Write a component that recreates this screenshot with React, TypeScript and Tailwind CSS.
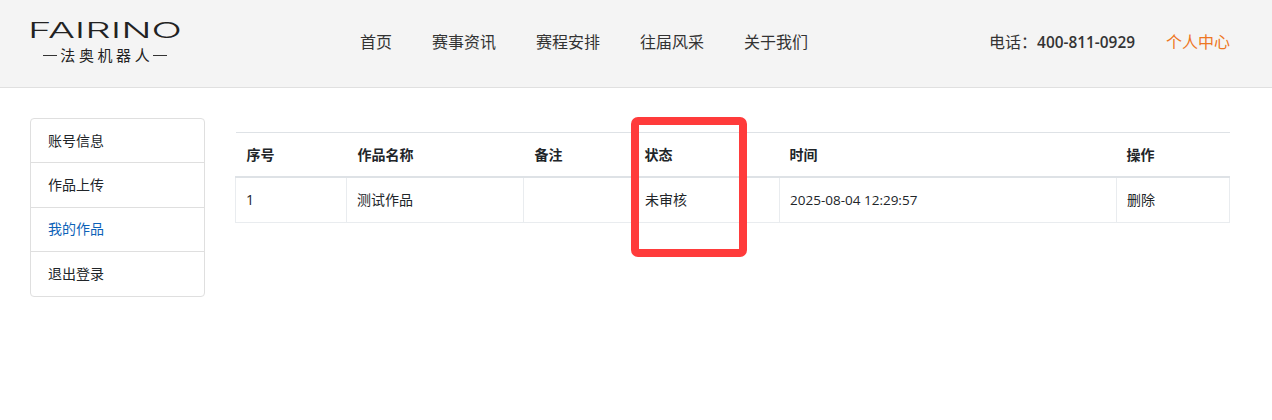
import React from 'react';

const font = { fontFamily: '"Open Sans", "Noto Sans CJK SC", sans-serif' };

const navItems = ['首页', '赛事资讯', '赛程安排', '往届风采', '关于我们'];
const sideItems = ['账号信息', '作品上传', '我的作品', '退出登录'];

const Logo = () => (
  <div className="w-[150px] flex flex-col items-center text-[#222]">
    <svg width="150" height="20" viewBox="0 0 150 20" className="block overflow-visible">
      <text
        x="-2"
        y="18"
        textLength="154"
        lengthAdjust="spacingAndGlyphs"
        fontSize="21"
        fontWeight="300"
        fill="#222"
        fontFamily="Inter, sans-serif"
      >
        FAIRINO
      </text>
    </svg>
    <div className="flex items-center justify-between mt-[5px] w-[124px]">
      <span className="h-px w-[14px] bg-[#333]" />
      <span className="text-[15px] leading-[20px] tracking-[3.6px] -mr-[3.6px] whitespace-nowrap">法奥机器人</span>
      <span className="h-px w-[14px] bg-[#333]" />
    </div>
  </div>
);

export default function App() {
  return (
    <div className="relative min-h-[420px] bg-white text-[14px] text-[#212529]" style={font}>
      <header className="h-[88px] bg-[#f4f4f4] border-b border-[#e0e0e0] flex items-start px-[30px]">
        <div className="mt-[20px]">
          <Logo />
        </div>
        <nav className="flex gap-[40px] ml-[180px] mt-[30px] text-[16px] leading-[24px] text-[#333]">
          {navItems.map((n) => (
            <a key={n}>{n}</a>
          ))}
        </nav>
        <div className="ml-auto mr-[12px] mt-[30px] flex gap-[31px] text-[16px] leading-[24px]">
          <span className="text-[#333]">
            电话：<span className="text-[15.4px] font-semibold">400-811-0929</span>
          </span>
          <a className="text-[#ee7623]">个人中心</a>
        </div>
      </header>

      <main className="flex px-[30px] pt-[30px]">
        <ul className="w-[175px] h-[179px] shrink-0 border border-[#dfdfdf] rounded-[4px]">
          {sideItems.map((s, i) => (
            <li
              key={s}
              className={`h-[44.25px] pl-[17px] pb-[1px] flex items-center border-[#dfdfdf] ${i < 3 ? 'border-b' : ''} ${
                i === 2 ? 'text-[#0d62b8]' : 'text-[#212529]'
              }`}
            >
              {s}
            </li>
          ))}
        </ul>

        <div className="ml-[30px] mt-[14px] flex-1">
          <table className="w-[994px] table-fixed border-collapse">
            <colgroup>
              <col className="w-[111px]" />
              <col className="w-[177px]" />
              <col className="w-[111px]" />
              <col className="w-[145px]" />
              <col className="w-[337px]" />
              <col className="w-[113px]" />
            </colgroup>
            <thead>
              <tr className="h-[44px] border-t border-b-2 border-[#dee2e6] text-left">
                <th className="pl-[11px] font-bold">序号</th>
                <th className="pl-[11px] font-bold">作品名称</th>
                <th className="pl-[11px] font-bold">备注</th>
                <th className="pl-[10px] font-bold">状态</th>
                <th className="pl-[10px] font-bold">时间</th>
                <th className="pl-[10px] font-bold">操作</th>
              </tr>
            </thead>
            <tbody>
              <tr className="h-[46px]">
                <td className="pl-[10px] border border-[#e9ecef]">1</td>
                <td className="pl-[10px] border border-[#e9ecef]">测试作品</td>
                <td className="pl-[10px] border border-[#e9ecef]"></td>
                <td className="pl-[10px] border border-[#e9ecef]">未审核</td>
                <td className="pl-[10px] border border-[#e9ecef] text-[13.5px]">2025-08-04 12:29:57</td>
                <td className="pl-[10px] border border-[#e9ecef]">删除</td>
              </tr>
            </tbody>
          </table>
        </div>
      </main>

      {/* annotation drawn over the screenshot */}
      <div className="absolute left-[631px] top-[117px] w-[116px] h-[140px] border-[8px] border-[#ff3b3b] rounded-[7px]" />
    </div>
  );
}
